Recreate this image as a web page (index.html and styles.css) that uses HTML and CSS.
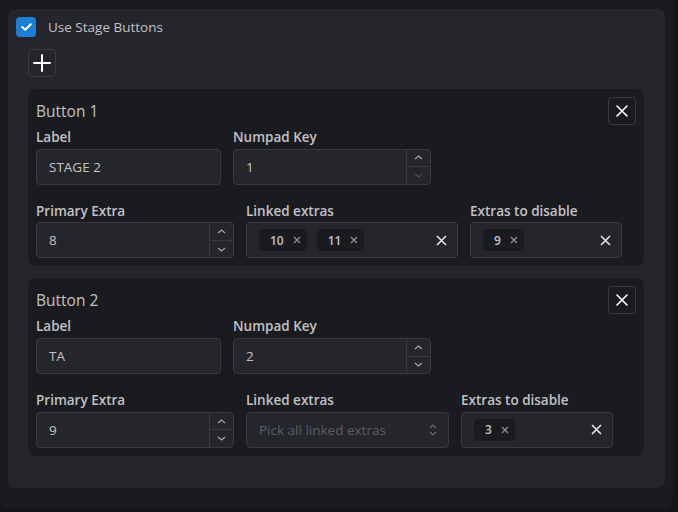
FILE: index.html
```html
<!DOCTYPE html>
<html>
<head>
<meta charset="utf-8">
<link rel="stylesheet" href="styles.css">
</head>
<body>
<div class="app">
  <div class="panel">
    <label class="check-row">
      <span class="checkbox">
        <svg width="11" height="8" viewBox="0 0 11 8"><path d="M1.2 4 L4.2 6.8 L9.8 1.2" fill="none" stroke="#fff" stroke-width="2" stroke-linecap="round" stroke-linejoin="round"/></svg>
      </span>
      <span class="check-label">Use Stage Buttons</span>
    </label>
    <div class="content">
      <button class="icon-btn">
        <svg width="18" height="18" viewBox="0 0 18 18"><path d="M9 1v16M1 9h16" stroke="#fff" stroke-width="2" stroke-linecap="round"/></svg>
      </button>

      <div class="card">
        <div class="card-head">
          <span class="card-title">Button 1</span>
          <button class="icon-btn">
            <svg width="12" height="12" viewBox="0 0 12 12"><path d="M1 1L11 11M11 1L1 11" stroke="#fff" stroke-width="1.6" stroke-linecap="round"/></svg>
          </button>
        </div>
        <div class="row row-first">
          <div class="field w-text">
            <span class="label">Label</span>
            <div class="input"><span class="value">STAGE 2</span></div>
          </div>
          <div class="field w-num">
            <span class="label">Numpad Key</span>
            <div class="input num"><span class="value">1</span>
              <div class="spin">
                <span class="spin-btn"><svg width="9" height="5" viewBox="0 0 9 5"><path d="M1 4L4.5 1L8 4" fill="none" stroke="#a6a7ab" stroke-width="1.2"/></svg></span>
                <span class="spin-btn"><svg width="9" height="5" viewBox="0 0 9 5"><path d="M1 1L4.5 4L8 1" fill="none" stroke="#4a4c52" stroke-width="1.2"/></svg></span>
              </div>
            </div>
          </div>
        </div>
        <div class="row">
          <div class="field w-num">
            <span class="label">Primary Extra</span>
            <div class="input num"><span class="value">8</span>
              <div class="spin">
                <span class="spin-btn"><svg width="9" height="5" viewBox="0 0 9 5"><path d="M1 4L4.5 1L8 4" fill="none" stroke="#a6a7ab" stroke-width="1.2"/></svg></span>
                <span class="spin-btn"><svg width="9" height="5" viewBox="0 0 9 5"><path d="M1 1L4.5 4L8 1" fill="none" stroke="#a6a7ab" stroke-width="1.2"/></svg></span>
              </div>
            </div>
          </div>
          <div class="field w-linked-a">
            <span class="label">Linked extras</span>
            <div class="input multi">
              <span class="pill">10<svg class="pill-x" width="8" height="8" viewBox="0 0 8 8"><path d="M1 1L7 7M7 1L1 7" stroke="#909296" stroke-width="1.1"/></svg></span>
              <span class="pill">11<svg class="pill-x" width="8" height="8" viewBox="0 0 8 8"><path d="M1 1L7 7M7 1L1 7" stroke="#909296" stroke-width="1.1"/></svg></span>
              <svg class="clear" width="11" height="11" viewBox="0 0 11 11"><path d="M1 1L10 10M10 1L1 10" stroke="#e4e5e7" stroke-width="1.6"/></svg>
            </div>
          </div>
          <div class="field w-dis">
            <span class="label">Extras to disable</span>
            <div class="input multi">
              <span class="pill">9<svg class="pill-x" width="8" height="8" viewBox="0 0 8 8"><path d="M1 1L7 7M7 1L1 7" stroke="#909296" stroke-width="1.1"/></svg></span>
              <svg class="clear" width="11" height="11" viewBox="0 0 11 11"><path d="M1 1L10 10M10 1L1 10" stroke="#e4e5e7" stroke-width="1.6"/></svg>
            </div>
          </div>
        </div>
      </div>

      <div class="card">
        <div class="card-head">
          <span class="card-title">Button 2</span>
          <button class="icon-btn">
            <svg width="12" height="12" viewBox="0 0 12 12"><path d="M1 1L11 11M11 1L1 11" stroke="#fff" stroke-width="1.6" stroke-linecap="round"/></svg>
          </button>
        </div>
        <div class="row row-first">
          <div class="field w-text">
            <span class="label">Label</span>
            <div class="input"><span class="value">TA</span></div>
          </div>
          <div class="field w-num">
            <span class="label">Numpad Key</span>
            <div class="input num"><span class="value">2</span>
              <div class="spin">
                <span class="spin-btn"><svg width="9" height="5" viewBox="0 0 9 5"><path d="M1 4L4.5 1L8 4" fill="none" stroke="#a6a7ab" stroke-width="1.2"/></svg></span>
                <span class="spin-btn"><svg width="9" height="5" viewBox="0 0 9 5"><path d="M1 1L4.5 4L8 1" fill="none" stroke="#a6a7ab" stroke-width="1.2"/></svg></span>
              </div>
            </div>
          </div>
        </div>
        <div class="row">
          <div class="field w-num">
            <span class="label">Primary Extra</span>
            <div class="input num"><span class="value">9</span>
              <div class="spin">
                <span class="spin-btn"><svg width="9" height="5" viewBox="0 0 9 5"><path d="M1 4L4.5 1L8 4" fill="none" stroke="#a6a7ab" stroke-width="1.2"/></svg></span>
                <span class="spin-btn"><svg width="9" height="5" viewBox="0 0 9 5"><path d="M1 1L4.5 4L8 1" fill="none" stroke="#a6a7ab" stroke-width="1.2"/></svg></span>
              </div>
            </div>
          </div>
          <div class="field w-linked-b">
            <span class="label">Linked extras</span>
            <div class="input multi">
              <span class="placeholder">Pick all linked extras</span>
              <svg class="selector" width="8" height="12" viewBox="0 0 8 12"><path d="M1 4L4 1L7 4M1 8L4 11L7 8" fill="none" stroke="#6b6e75" stroke-width="1.2"/></svg>
            </div>
          </div>
          <div class="field w-dis">
            <span class="label">Extras to disable</span>
            <div class="input multi">
              <span class="pill">3<svg class="pill-x" width="8" height="8" viewBox="0 0 8 8"><path d="M1 1L7 7M7 1L1 7" stroke="#909296" stroke-width="1.1"/></svg></span>
              <svg class="clear" width="11" height="11" viewBox="0 0 11 11"><path d="M1 1L10 10M10 1L1 10" stroke="#e4e5e7" stroke-width="1.6"/></svg>
            </div>
          </div>
        </div>
      </div>
    </div>
  </div>
</div>
</body>
</html>
```

FILE: styles.css
```css
* { box-sizing: border-box; }
html, body { margin: 0; padding: 0; }
body {
  background: #141517;
  font-family: "Open Sans", "Noto Sans", sans-serif;
  color: #c1c2c5;
  width: 678px;
  height: 512px;
  overflow: hidden;
}
.app {
  width: 673px;
  height: 508px;
  background: #1a1b1e;
  border-radius: 0 0 8px 8px;
  padding: 9px 8px 0 8px;
}
.panel {
  width: 657px;
  height: 479px;
  background: #25262b;
  border-radius: 8px;
  padding: 8px;
}
.check-row {
  display: flex;
  align-items: center;
  gap: 12px;
  height: 20px;
}
.checkbox {
  width: 20px;
  height: 20px;
  border-radius: 4px;
  background: #1c7ed6;
  display: flex;
  align-items: center;
  justify-content: center;
}
.check-label {
  font-size: 13.5px;
  color: #c1c2c5;
}
.content {
  padding: 12px 12px 0 12px;
  display: flex;
  flex-direction: column;
  align-items: flex-start;
  gap: 12px;
}
.icon-btn {
  width: 28px;
  height: 28px;
  padding: 0;
  border: 1px solid #373a40;
  border-radius: 4px;
  background: #25262b;
  display: flex;
  align-items: center;
  justify-content: center;
}
.card {
  width: 616px;
  background: #1a1b1e;
  border-radius: 8px;
  padding: 8px 8px 8px 8px;
}
.card-head {
  display: flex;
  justify-content: space-between;
  align-items: center;
  height: 28px;
}
.card .icon-btn { background: #1a1b1e; }
.card-title {
  font-size: 15.5px;
  color: #c1c2c5;
}
.row {
  display: flex;
  gap: 12px;
  margin-top: 16px;
}
.row-first { margin-top: 2px; }
.field {
  display: flex;
  flex-direction: column;
}
.label {
  font-size: 13.5px;
  font-weight: 600;
  line-height: 21.7px;
  color: #c1c2c5;
}
.w-text { width: 185px; }
.w-num { width: 198px; }
.w-linked-a { width: 212px; }
.w-linked-b { width: 203px; }
.w-dis { width: 152px; }
.input {
  height: 36px;
  background: #25262b;
  border: 1px solid #373a40;
  border-radius: 4px;
  display: flex;
  align-items: center;
  font-size: 13.5px;
  color: #c1c2c5;
}
.value { padding-left: 12px; flex: 1; }
.num { overflow: hidden; }
.spin {
  width: 24px;
  height: 100%;
  border-left: 1px solid #373a40;
  display: flex;
  flex-direction: column;
}
.spin-btn {
  flex: 1;
  display: flex;
  align-items: center;
  justify-content: center;
}
.spin-btn + .spin-btn { border-top: 1px solid #373a40; }
.multi {
  padding: 0 10px 0 12px;
  gap: 10px;
}
.pill {
  height: 22px;
  background: #1a1b1e;
  border-radius: 4px;
  padding: 0 6px 0 11px;
  display: flex;
  align-items: center;
  gap: 9px;
  font-size: 12px;
  font-weight: 600;
  color: #c1c2c5;
}
.clear { margin-left: auto; margin-right: 0; }
.placeholder {
  color: #5c5f66;
  font-size: 13.5px;
  flex: 1;
}
.selector { margin-right: 1px; }
```
